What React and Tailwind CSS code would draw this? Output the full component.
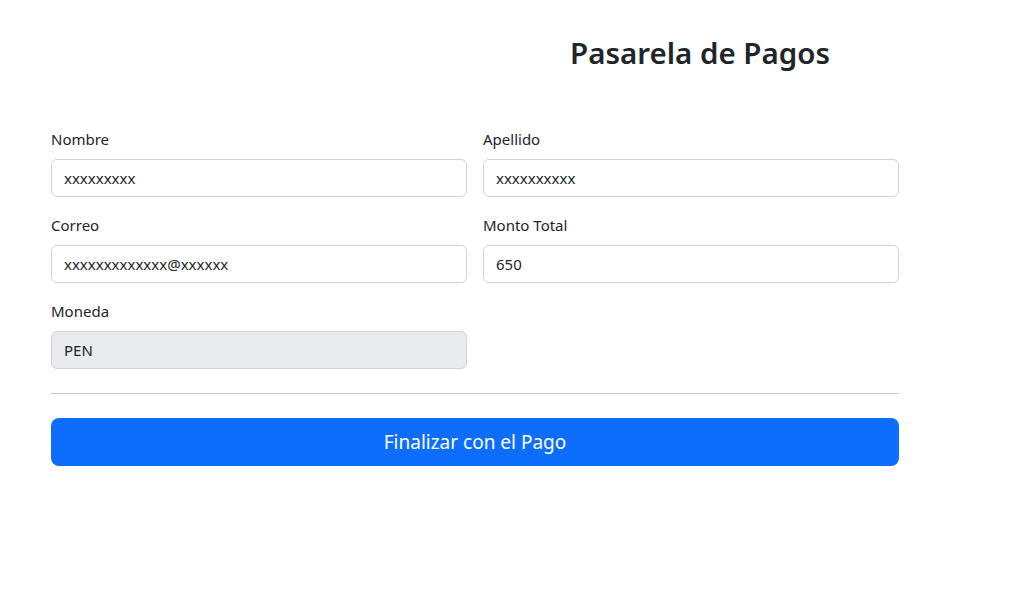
export default function App() {
  const input =
    "w-full h-[38px] rounded-[6px] border border-[#ced4da] px-3 text-[15px] text-[#212529] outline-none";

  return (
    <div className="min-h-screen bg-white text-[#212529] [font-family:'Noto_Sans',sans-serif]">
      <div className="w-[848px] ml-[51px] pt-[33px]">
        <h2 className="pl-[519px] text-[29.5px] font-semibold leading-[40px] whitespace-nowrap">Pasarela de Pagos</h2>

        <form className="mt-[54px]">
          <div className="grid grid-cols-2 gap-x-4">
            {[
              { label: "Nombre", value: "xxxxxxxxx" },
              { label: "Apellido", value: "xxxxxxxxxx" },
              { label: "Correo", value: "xxxxxxxxxxxxx@xxxxxx" },
              { label: "Monto Total", value: "650" },
            ].map(f => (
              <div key={f.label} className="mb-4">
                <label className="block mb-2 text-[15px] leading-6">{f.label}</label>
                <input className={input} defaultValue={f.value} />
              </div>
            ))}
            <div>
              <label className="block mb-2 text-[15px] leading-6">Moneda</label>
              <input className={`${input} bg-[#e9ecef]`} defaultValue="PEN" disabled />
            </div>
          </div>

          <hr className="mt-6 mb-6 border-t border-[#c8c8c8]" />

          <button type="button"
            className="w-full h-12 rounded-lg bg-[#0d6efd] text-white text-[19px]">
            Finalizar con el Pago
          </button>
        </form>
      </div>
    </div>
  );
}
